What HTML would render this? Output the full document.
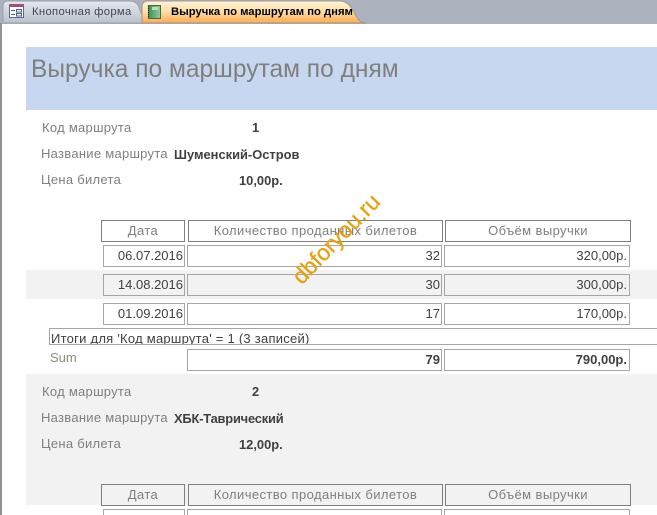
<!DOCTYPE html>
<html lang="ru"><head><meta charset="utf-8">
<style>
html,body{margin:0;padding:0;background:#fff;width:657px;height:515px;overflow:hidden}
#w{position:absolute;left:0;top:0;width:657px;height:515px;overflow:hidden;font-family:"Liberation Sans",sans-serif}
.a{position:absolute}
.t{position:absolute;white-space:nowrap;line-height:16px;height:16px}
.l{color:#7f7f7f;font-size:13px;letter-spacing:.28px}
.v{color:#404040;font-size:12.9px;font-weight:bold}
.b{position:absolute;box-sizing:border-box;border:1px solid #a6a6a6;color:#404040;font-size:13px;text-align:right;padding-right:1px;line-height:20px;white-space:nowrap;overflow:hidden}
.h{position:absolute;box-sizing:border-box;border:1px solid #7f7f7f;color:#7f7f7f;font-size:13px;letter-spacing:.4px;text-align:center;line-height:20px;white-space:nowrap;overflow:hidden}
</style></head><body><div id="w">
<svg class="a" style="left:0;top:0" width="657" height="24" viewBox="0 0 657 24">
<defs>
<linearGradient id="g1" x1="0" y1="0" x2="0" y2="1"><stop offset="0" stop-color="#e4e7ec"/><stop offset="1" stop-color="#bcc2cb"/></linearGradient>
<linearGradient id="g2" x1="0" y1="0" x2="0" y2="1"><stop offset="0" stop-color="#fff3dc"/><stop offset=".5" stop-color="#ffdca3"/><stop offset="1" stop-color="#fbaa50"/></linearGradient>
<linearGradient id="g3" x1="0" y1="0" x2="1" y2="0"><stop offset="0" stop-color="#3f8f52"/><stop offset="1" stop-color="#9cc8a0"/></linearGradient>
</defs>
<rect width="657" height="24" fill="#abb2bd"/>
<path d="M3 23V6Q3 1 8 1H130Q135 1 138 5L145 23Z" fill="url(#g1)" stroke="#9aa0aa"/>
<path d="M142 23V7Q142 1 148 1H340Q346 1 350 6L358 19Q361 23 366 23Z" fill="url(#g2)" stroke="#a5978a"/>
<rect x="9.500" y="4.500" width="14" height="13" fill="#fff" stroke="#5a6a94"/>
<rect x="9.500" y="4.500" width="14" height="2.500" fill="#b5476e"/>
<path d="M11 10.500H15M11 14.500H15" stroke="#4a5a85"/>
<rect x="16.500" y="9.500" width="5" height="2.500" fill="none" stroke="#4a5a85"/>
<rect x="16.500" y="13.500" width="5" height="2.500" fill="none" stroke="#4a5a85"/>
<rect x="148.500" y="5.500" width="12" height="13" fill="url(#g3)" stroke="#3d6d45"/>
<path d="M148.500 6V18" stroke="#222" stroke-dasharray="1 1"/>
<rect x="152" y="7" width="6" height="3" fill="#b9dcb9"/>
</svg>
<div class="t" style="left:32px;top:4px;font-size:11.3px;color:#3f4652;letter-spacing:.32px">Кнопочная форма</div>
<div class="t" style="left:171px;top:4px;font-size:11.3px;font-weight:bold;color:#000;letter-spacing:-.02px">Выручка по маршрутам по дням</div>
<div class="a" style="left:0;top:23px;width:2px;height:492px;background:#8f939a"></div>

<div class="a" style="left:26px;top:47px;width:631px;height:63px;background:#c6d7ef"></div>
<div class="t" style="left:31px;top:55px;height:30px;line-height:30px;font-size:24.55px;color:#7f7f7f">Выручка по маршрутам по дням</div>

<div class="t l" style="left:42px;top:120px">Код маршрута</div>
<div class="t v" style="left:252px;top:120px">1</div>
<div class="t l" style="left:41px;top:146px">Название маршрута</div>
<div class="t v" style="left:174px;top:147px">Шуменский-Остров</div>
<div class="t l" style="left:41px;top:172px">Цена билета</div>
<div class="t v" style="left:239px;top:173px">10,00р.</div>

<div class="h" style="left:101px;top:220px;width:84px;height:22px">Дата</div>
<div class="h" style="left:188px;top:220px;width:255px;height:22px">Количество проданных билетов</div>
<div class="h" style="left:445px;top:220px;width:186px;height:22px">Объём выручки</div>

<div class="a" style="left:26px;top:270px;width:631px;height:29px;background:#f2f2f2"></div>

<div class="b" style="left:103px;top:245px;width:82px;height:22px">06.07.2016</div>
<div class="b" style="left:187px;top:245px;width:255px;height:22px">32</div>
<div class="b" style="left:444px;top:245px;width:186px;height:22px;padding-right:2px">320,00р.</div>

<div class="b" style="left:103px;top:274px;width:82px;height:22px">14.08.2016</div>
<div class="b" style="left:187px;top:274px;width:255px;height:22px">30</div>
<div class="b" style="left:444px;top:274px;width:186px;height:22px;padding-right:2px">300,00р.</div>

<div class="b" style="left:103px;top:303px;width:82px;height:22px">01.09.2016</div>
<div class="b" style="left:187px;top:303px;width:255px;height:22px">17</div>
<div class="b" style="left:444px;top:303px;width:186px;height:22px;padding-right:2px">170,00р.</div>

<div class="b" style="left:49px;top:328px;width:640px;height:17px;text-align:left;padding:0 0 0 1px;line-height:20px;letter-spacing:.25px">Итоги для 'Код маршрута' = 1 (3 записей)</div>
<div class="t l" style="left:50px;top:350px;color:#8c8c7c;letter-spacing:0">Sum</div>
<div class="b" style="left:187px;top:349px;width:255px;height:22px;font-weight:bold">79</div>
<div class="b" style="left:444px;top:349px;width:186px;height:22px;font-weight:bold;padding-right:2px">790,00р.</div>

<div class="a" style="left:26px;top:374px;width:631px;height:131px;background:#f2f2f2"></div>
<div class="t l" style="left:42px;top:384px">Код маршрута</div>
<div class="t v" style="left:252px;top:384px">2</div>
<div class="t l" style="left:41px;top:410px">Название маршрута</div>
<div class="t v" style="left:174px;top:411px;letter-spacing:-.2px">ХБК-Таврический</div>
<div class="t l" style="left:41px;top:436px">Цена билета</div>
<div class="t v" style="left:239px;top:437px">12,00р.</div>

<div class="h" style="left:101px;top:484px;width:84px;height:22px">Дата</div>
<div class="h" style="left:188px;top:484px;width:255px;height:22px">Количество проданных билетов</div>
<div class="h" style="left:445px;top:484px;width:186px;height:22px">Объём выручки</div>
<div class="b" style="left:103px;top:509px;width:82px;height:22px"></div>
<div class="b" style="left:187px;top:509px;width:255px;height:22px"></div>
<div class="b" style="left:444px;top:509px;width:186px;height:22px"></div>

<div class="t" style="left:296px;top:268px;height:24px;line-height:24px;font-size:22.7px;color:#e8a010;-webkit-text-stroke:.3px #e8a010;transform-origin:0 50%;transform:rotate(-46deg)">dbforyou.ru</div>
</div></body></html>
